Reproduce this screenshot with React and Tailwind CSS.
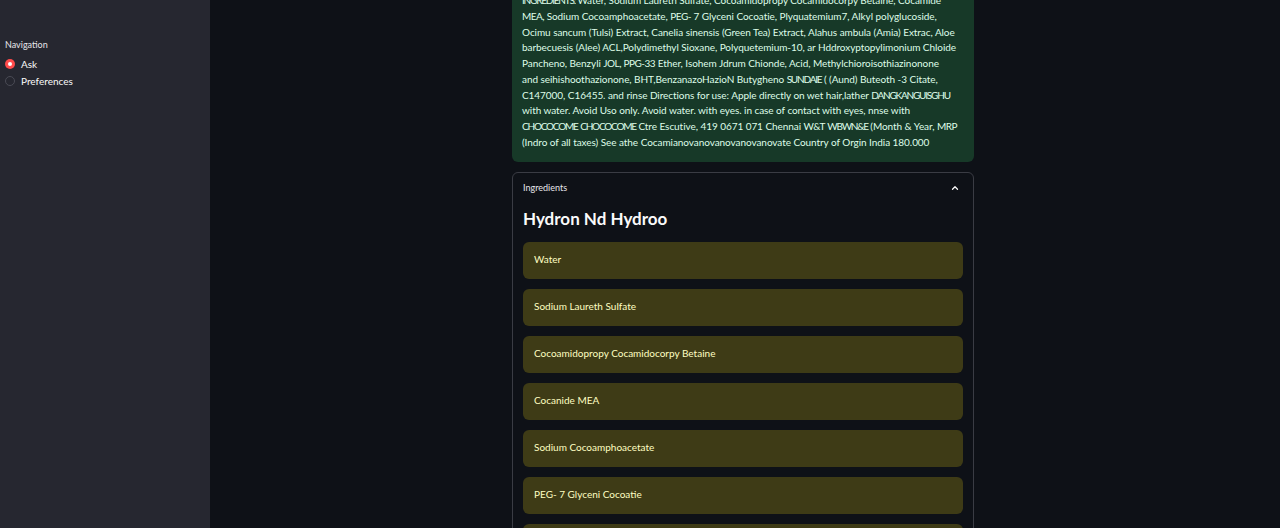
import React from "react";

const lines = [
  "INGREDIENTS: Water, Sodium Laureth Sulfate, Cocoamidopropy Cocamidocorpy Betaine, Cocamide",
  "MEA, Sodium Cocoamphoacetate, PEG- 7 Glyceni Cocoatie, Plyquatemium7, Alkyl polyglucoside,",
  "Ocimu sancum (Tulsi) Extract, Canelia sinensis (Green Tea) Extract, Alahus ambula (Amia) Extrac, Aloe",
  "barbecuesis (Alee) ACL,Polydimethyl Sioxane, Polyquetemium-10, ar Hddroxyptopylimonium Chloide",
  "Pancheno, Benzyli JOL, PPG-33 Ether, Isohem Jdrum Chionde, Acid, Methylchioroisothiazinonone",
  "and seihishoothazionone, BHT,BenzanazoHazioN Butygheno SUNDAIE ( (Aund) Buteoth -3 Citate,",
  "C147000, C16455. and rinse Directions for use: Apple directly on wet hair,lather DANGKANGUISGHU",
  "with water. Avoid Uso only. Avoid water. with eyes. in case of contact with eyes, nnse with",
  "CHOCOCOME CHOCOCOME Ctre Escutive, 419 0671 071 Chennai W&T WBWN&E (Month & Year, MRP",
  "(Indro of all taxes) See athe Cocamianovanovanovanovanovate Country of Orgin India 180.000",
];

const items = [
  "Water",
  "Sodium Laureth Sulfate",
  "Cocoamidopropy Cocamidocorpy Betaine",
  "Cocanide MEA",
  "Sodium Cocoamphoacetate",
  "PEG- 7 Glyceni Cocoatie",
  "Plyquatemium7",
  "Alkyl polyglucoside",
];

function Line({ text }) {
  const parts = text.split(/(\s+)/);
  return (
    <div className="whitespace-nowrap">
      {parts.map((p, i) => {
        const caps = (p.match(/[A-Z]/g) || []).length;
        const lower = (p.match(/[a-z]/g) || []).length;
        if (caps >= 5 && lower === 0) {
          return (
            <span key={i} className="tracking-[-1.2px]">
              {p}
            </span>
          );
        }
        if (caps >= 2 && lower === 0) {
          return (
            <span key={i} className="tracking-[-0.5px]">
              {p}
            </span>
          );
        }
        return <React.Fragment key={i}>{p}</React.Fragment>;
      })}
    </div>
  );
}

export default function App() {
  return (
    <div
      className="flex h-[528px] w-[1280px] overflow-hidden bg-[#0e1117]"
      style={{ fontFamily: '"Source Sans Pro", Lato, "Open Sans", sans-serif' }}
    >
      <aside className="w-[210px] shrink-0 bg-[#262730] pl-[5px] pt-[39px] text-[#fafafa]">
        <div className="text-[9px] leading-[12px] text-[#e6e6ea]">Navigation</div>
        <div className="mt-[7px] flex flex-col gap-[5px]">
          <label className="flex items-center gap-[6px] text-[10px] leading-[12px]">
            <span className="flex h-[10px] w-[10px] items-center justify-center rounded-full bg-[#ff4b4b]">
              <span className="h-[4px] w-[4px] rounded-full bg-white" />
            </span>
            <span>Ask</span>
          </label>
          <label className="flex items-center gap-[6px] text-[10px] leading-[12px]">
            <span className="h-[10px] w-[10px] rounded-full border border-[#4a4b55] bg-[#262730]" />
            <span>Preferences</span>
          </label>
        </div>
      </aside>
      <main className="flex-1 pl-[302px]">
        <div className="w-[462px]">
          <div className="-mt-[18px] overflow-hidden rounded-[6px] bg-[#173928] px-[10px] py-[11px] text-[10px] leading-[15.75px] tracking-[-0.06px] text-[#dffde9]">
            {lines.map((l, i) => (
              <Line key={i} text={l} />
            ))}
          </div>
          <div className="mt-[10px] rounded-[6px] border border-[#3a3c44] px-[10px] pb-[10px]">
            <div className="flex h-[30px] items-center justify-between">
              <span className="text-[9px] text-[#e6e6ea]">Ingredients</span>
              <svg width="10" height="10" viewBox="0 0 24 24" fill="none" stroke="#fafafa" strokeWidth="3" strokeLinecap="round" strokeLinejoin="round" className="mr-[3px]">
                <path d="M6 15l6-6 6 6" />
              </svg>
            </div>
            <h2 className="mt-[3px] text-[17px] font-bold leading-[26px] text-[#fafafa]">
              Hydron Nd Hydroo
            </h2>
            <div className="mt-[10px] flex flex-col gap-[10px]">
              {items.map((it, i) => (
                <div
                  key={i}
                  className="flex h-[37px] items-center rounded-[6px] bg-[#3e3b16] px-[11px] pb-[1px] text-[10px] text-[#ffffc2]"
                >
                  {it}
                </div>
              ))}
            </div>
          </div>
        </div>
      </main>
    </div>
  );
}
